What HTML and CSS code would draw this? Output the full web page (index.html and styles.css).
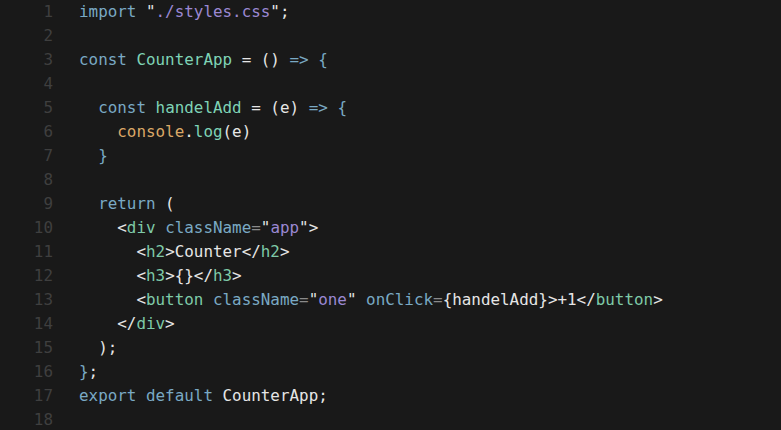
FILE: index.html
```html
<!DOCTYPE html>
<html lang="en">
<head>
    <meta charset="UTF-8">
    <meta name="viewport" content="width=device-width, initial-scale=1.0">
    <title>CounterApp.jsx</title>
    <link rel="stylesheet" href="styles.css">
</head>
<body>

    <!-- Editor view -->
    <div class="editor">
        <div class="line"><span class="num">1</span><span class="src"><span class="kw">import</span> "<span class="str">./styles.css</span>";</span></div>
        <div class="line"><span class="num">2</span><span class="src"></span></div>
        <div class="line"><span class="num">3</span><span class="src"><span class="kw">const</span> <span class="fn">CounterApp</span> = () <span class="kw">=&gt;</span> <span class="kw">{</span></span></div>
        <div class="line"><span class="num">4</span><span class="src"></span></div>
        <div class="line"><span class="num">5</span><span class="src">  <span class="kw">const</span> <span class="fn">handelAdd</span> = (e) <span class="kw">=&gt;</span> <span class="kw">{</span></span></div>
        <div class="line"><span class="num">6</span><span class="src">    <span class="obj">console</span>.<span class="fn">log</span>(e)</span></div>
        <div class="line"><span class="num">7</span><span class="src">  <span class="kw">}</span></span></div>
        <div class="line"><span class="num">8</span><span class="src"></span></div>
        <div class="line"><span class="num">9</span><span class="src">  <span class="kw">return</span> (</span></div>
        <div class="line"><span class="num">10</span><span class="src">    &lt;<span class="tag">div</span> <span class="kw">className</span><span class="op">=</span>"<span class="str">app</span>"&gt;</span></div>
        <div class="line"><span class="num">11</span><span class="src">      &lt;<span class="tag">h2</span>&gt;Counter&lt;/<span class="tag">h2</span>&gt;</span></div>
        <div class="line"><span class="num">12</span><span class="src">      &lt;<span class="tag">h3</span>&gt;{}&lt;/<span class="tag">h3</span>&gt;</span></div>
        <div class="line"><span class="num">13</span><span class="src">      &lt;<span class="tag">button</span> <span class="kw">className</span><span class="op">=</span>"<span class="str">one</span>" <span class="kw">onClick</span><span class="op">=</span>{handelAdd}&gt;+1&lt;/<span class="tag">button</span>&gt;</span></div>
        <div class="line"><span class="num">14</span><span class="src">    &lt;/<span class="tag">div</span>&gt;</span></div>
        <div class="line"><span class="num">15</span><span class="src">  );</span></div>
        <div class="line"><span class="num">16</span><span class="src"><span class="kw">}</span>;</span></div>
        <div class="line"><span class="num">17</span><span class="src"><span class="kw">export</span> <span class="kw">default</span> CounterApp;</span></div>
        <div class="line"><span class="num">18</span><span class="src"></span></div>
    </div>

</body>
</html>
```

FILE: styles.css
```css
body {
    background-color: #191919;
    margin: 0;
    padding: 0;
    height: 100vh;
    overflow: hidden;
}

.editor {
    font-family: 'DejaVu Sans Mono', 'Liberation Mono', monospace;
    font-size: 15.9px;
    line-height: 24px;
    color: #e6e6e6;
}

.line {
    display: flex;
    height: 24px;
}

.num {
    width: 53px;
    text-align: right;
    color: #3f3f3f;
    flex-shrink: 0;
}

.src {
    padding-left: 26px;
    white-space: pre;
}

.kw {
    color: #7aa9c4;
}

.str {
    color: #9b88d2;
}

.fn {
    color: #7fd3b6;
}

.obj {
    color: #dba867;
}

.tag {
    color: #7fcaa8;
}

.op {
    color: #8a8a8a;
}
```
